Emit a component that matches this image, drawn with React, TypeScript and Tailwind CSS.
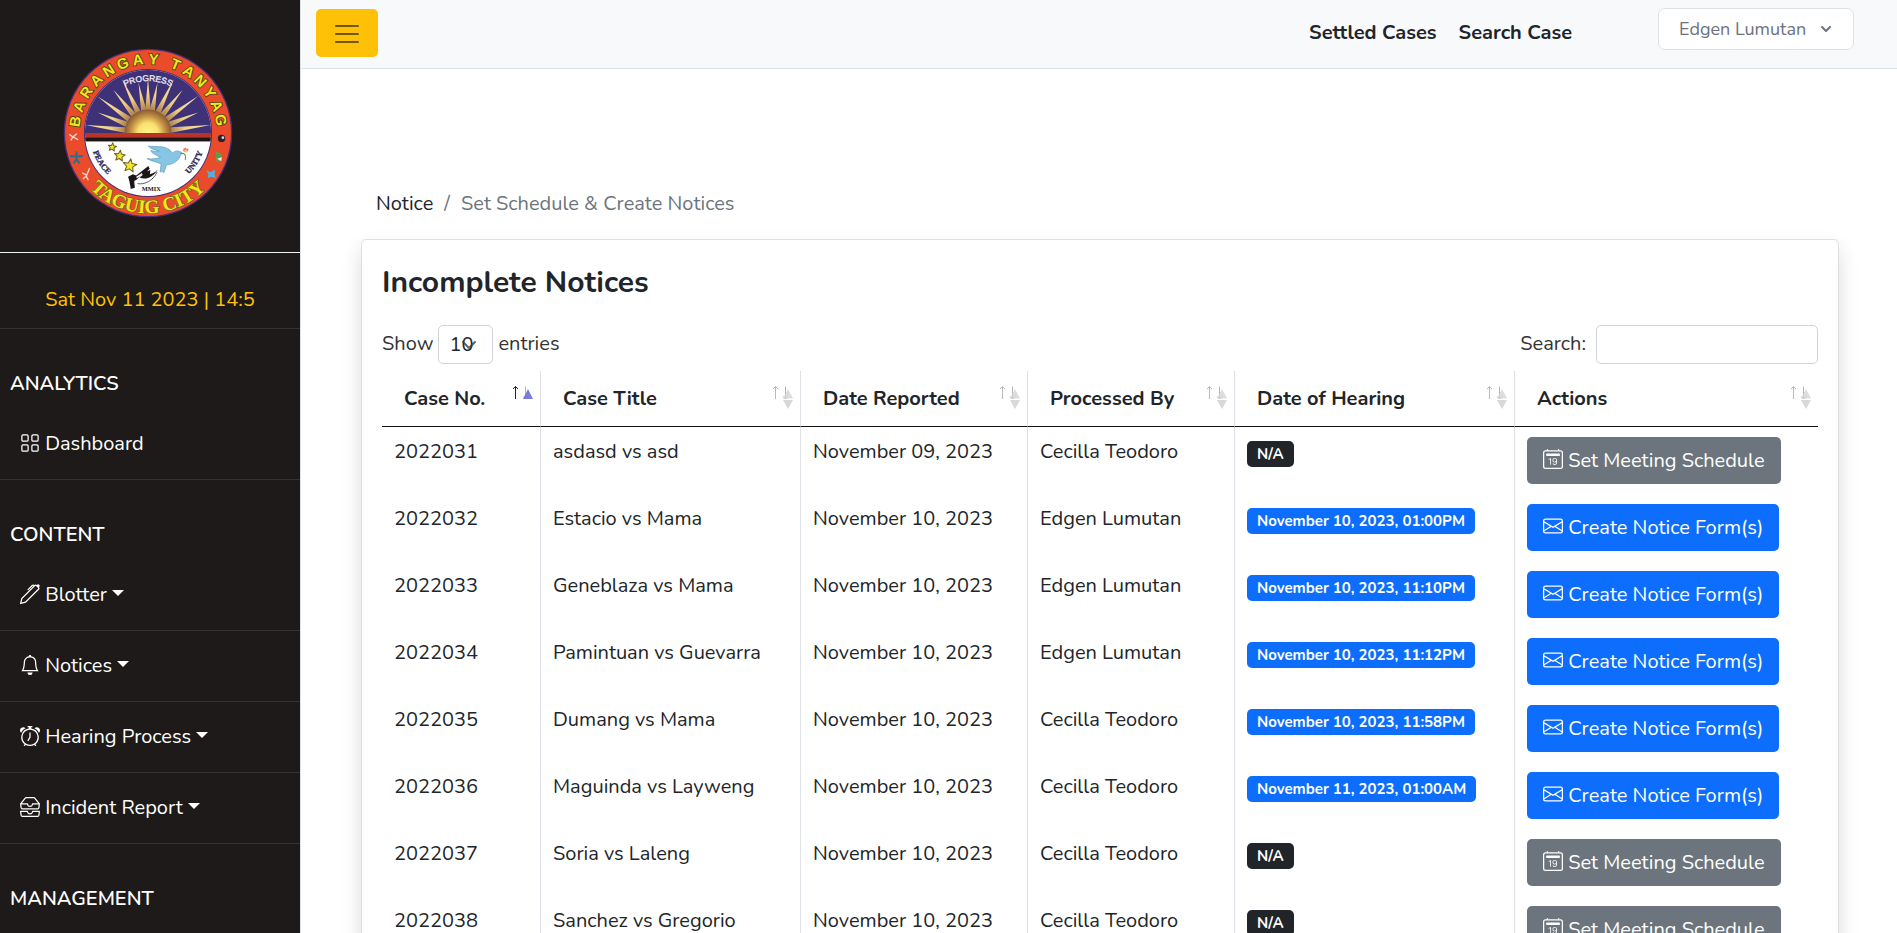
import type { ReactNode } from "react";
import type { IconType } from "react-icons";
import { BsAlarm, BsBell, BsCalendar2Date, BsEnvelope, BsGrid, BsInboxes, BsPen } from "react-icons/bs";

type Case = {
  no: string;
  title: string;
  reported: string;
  by: string;
  hearing: string | null;
};

const cases: Case[] = [
  { no: "2022031", title: "asdasd vs asd", reported: "November 09, 2023", by: "Cecilla Teodoro", hearing: null },
  { no: "2022032", title: "Estacio vs Mama", reported: "November 10, 2023", by: "Edgen Lumutan", hearing: "November 10, 2023, 01:00PM" },
  { no: "2022033", title: "Geneblaza vs Mama", reported: "November 10, 2023", by: "Edgen Lumutan", hearing: "November 10, 2023, 11:10PM" },
  { no: "2022034", title: "Pamintuan vs Guevarra", reported: "November 10, 2023", by: "Edgen Lumutan", hearing: "November 10, 2023, 11:12PM" },
  { no: "2022035", title: "Dumang vs Mama", reported: "November 10, 2023", by: "Cecilla Teodoro", hearing: "November 10, 2023, 11:58PM" },
  { no: "2022036", title: "Maguinda vs Layweng", reported: "November 10, 2023", by: "Cecilla Teodoro", hearing: "November 11, 2023, 01:00AM" },
  { no: "2022037", title: "Soria vs Laleng", reported: "November 10, 2023", by: "Cecilla Teodoro", hearing: null },
  { no: "2022038", title: "Sanchez vs Gregorio", reported: "November 10, 2023", by: "Cecilla Teodoro", hearing: null },
];

const columns = [
  { label: "Case No.", width: "w-[159px]" },
  { label: "Case Title", width: "w-[260px]" },
  { label: "Date Reported", width: "w-[227px]" },
  { label: "Processed By", width: "w-[207px]" },
  { label: "Date of Hearing", width: "w-[280px]" },
  { label: "Actions", width: "w-auto" },
];

const rays: [number, number][] = [
  [140, 284], [176, 247], [176, 200], [222, 180], [248, 148], [297, 160], [325, 146],
  [353, 160], [402, 148], [428, 180], [474, 198], [474, 247], [510, 284],
];

/* Points of a sun ray: a thin wedge from the disc at (325, 308) to its tip. */
function rayPoints([x, y]: [number, number]) {
  const dx = x - 325;
  const dy = y - 308;
  const len = Math.hypot(dx, dy);
  const nx = (-dy / len) * 9;
  const ny = (dx / len) * 9;
  const bx = 325 + (dx / len) * 58;
  const by = 308 + (dy / len) * 58;
  return `${bx + nx},${by + ny} ${x},${y} ${bx - nx},${by - ny}`;
}

function starPoints(cx: number, cy: number, r: number) {
  return Array.from({ length: 10 }, (_, i) => {
    const a = ((i * 36 - 90 + 8) * Math.PI) / 180;
    const k = i % 2 ? r * 0.45 : r;
    return `${cx + k * Math.cos(a)},${cy + k * Math.sin(a)}`;
  }).join(" ");
}

function RingWord({ word, from, step }: { word: string; from: number; step: number }) {
  return (
    <>
      {word.split("").map((letter, i) => (
        <text key={i} x="325" y="104" textAnchor="middle" transform={`rotate(${from + i * step} 325 308)`}>
          {letter}
        </text>
      ))}
    </>
  );
}

function Seal() {
  return (
    <svg viewBox="73 56 504 504" className="size-[170px]" role="img" aria-label="Barangay Tanyag seal">
      <defs>
        <radialGradient id="sun" gradientUnits="userSpaceOnUse" cx="325" cy="308" r="72">
          <stop offset="0" stopColor="#fff68a" />
          <stop offset="0.42" stopColor="#f9e070" />
          <stop offset="0.7" stopColor="#c59243" />
          <stop offset="1" stopColor="#7d5336" />
        </radialGradient>
        <radialGradient id="ray" gradientUnits="userSpaceOnUse" cx="325" cy="308" r="185">
          <stop offset="0.35" stopColor="#a87a45" />
          <stop offset="0.6" stopColor="#eed087" />
          <stop offset="1" stopColor="#f7e7a8" />
        </radialGradient>
        <clipPath id="disc">
          <circle cx="325" cy="308" r="187" />
        </clipPath>
        <clipPath id="sky">
          <rect x="130" y="110" width="390" height="198" />
        </clipPath>
        <path id="arc-progress" d="M 171 308 A 154 154 0 0 1 479 308" />
        <path id="arc-city" d="M 87 308 A 238 238 0 0 0 563 308" />
        <path id="arc-inner" d="M 153 308 A 172 172 0 0 0 497 308" />
      </defs>
      <circle cx="325" cy="308" r="250" fill="#4b2f78" />
      <circle cx="325" cy="308" r="246" fill="#ea4b2b" />
      <circle cx="325" cy="308" r="190" fill="#4a2f78" />
      <g clipPath="url(#disc)">
        <rect x="130" y="110" width="390" height="400" fill="#fefefe" />
        <rect x="130" y="110" width="390" height="198" fill="#3e3178" />
        <g clipPath="url(#sky)">
          {rays.map((ray) => (
            <polygon key={ray.join()} points={rayPoints(ray)} fill="url(#ray)" />
          ))}
          <circle cx="325" cy="308" r="70" fill="url(#sun)" />
        </g>
        <rect x="130" y="308" width="390" height="14" fill="#b93426" />
        <rect x="130" y="321" width="390" height="12" fill="#1b1718" />
      </g>
      <g fontFamily="Liberation Sans, sans-serif" fontWeight="700" fontSize="44" fill="#f3e51c" stroke="#4b4310" strokeWidth="5" paintOrder="stroke">
        <RingWord word="BARANGAY" from={-81} step={12.2} />
        <RingWord word="TANYAG" from={22} step={11.6} />
      </g>
      <text fontFamily="Liberation Serif, serif" fontWeight="700" fontSize="57" fill="#f3e51c" stroke="#6b6a1c" strokeWidth="4" paintOrder="stroke" textAnchor="middle">
        <textPath href="#arc-city" startOffset="50%">TAGUIG CITY</textPath>
      </text>
      <text fontFamily="Liberation Sans, sans-serif" fontSize="25" fill="#e9e6f2" stroke="#e9e6f2" strokeWidth="1" textAnchor="middle">
        <textPath href="#arc-progress" startOffset="50%">PROGRESS</textPath>
      </text>
      <g fontFamily="Liberation Serif, serif" fontWeight="700" fontSize="24" fill="#2c2a5c" stroke="#2c2a5c" strokeWidth="1" textAnchor="middle">
        <text><textPath href="#arc-inner" startOffset="18%">PEACE</textPath></text>
        <text><textPath href="#arc-inner" startOffset="82%">UNITY</textPath></text>
      </g>
      <text x="335" y="480" fontFamily="Liberation Serif, serif" fontWeight="700" fontSize="19" fill="#1b1718" textAnchor="middle">MMIX</text>
      <g fill="#f5e42a" stroke="#6b6020" strokeWidth="3" strokeLinejoin="round">
        <polygon points={starPoints(219, 350, 13)} />
        <polygon points={starPoints(241, 376, 17)} />
        <polygon points={starPoints(271, 405, 21)} />
      </g>
      <g fill="#86c5e4" stroke="#5799bd" strokeWidth="2" strokeLinejoin="round">
        <path d="M326 347 C350 349 374 346 388 357 L398 368 C406 358 418 360 427 368 L421 374 C416 392 396 402 380 402 L372 426 L366 421 L361 424 L364 400 C350 392 334 392 322 384 C338 386 352 384 362 380 C350 374 332 366 334 360 C344 363 352 363 358 362 C346 358 332 354 326 347 Z" />
      </g>
      <path d="M422 369 C434 366 440 376 435 388" fill="none" stroke="#5c9a4a" strokeWidth="3" />
      <path d="M430 354 l6 -3 4 4 6 -1 -3 8 -8 3 -6 -4 Z" fill="#ef7aa0" />
      <circle cx="437" cy="362" r="4" fill="#f2d33a" />
      <g fill="#1b1718">
        <path d="M266 438 L280 430 L290 434 L308 420 L326 406 L330 414 L322 422 L332 418 L330 436 L316 438 L308 430 L292 446 L284 450 L286 470 L274 474 L270 452 Z" />
        <path d="M300 440 C318 448 340 440 354 416 C344 428 326 434 312 430 Z" />
        <path d="M294 458 C314 462 340 450 352 424" fill="none" stroke="#1b1718" strokeWidth="2" />
      </g>
      <path d="M290 438 L308 426 L306 434 L292 442 Z" fill="#fefefe" />
      <g stroke="#f5d9cf" strokeWidth="4" fill="none">
        <path d="M92 312 l10 8 l12 -10 M102 320 l-6 10 M104 320 l14 8" />
        <path d="M132 444 l10 -8 l10 -24 M142 436 l6 12 M130 426 l12 6" />
      </g>
      <path d="M94 377 H132 M113 362 V388 M104 398 L113 386 L122 398" stroke="#2a6f8c" strokeWidth="6" fill="none" />
      <circle cx="543" cy="324" r="11" fill="#2b2230" />
      <circle cx="547" cy="322" r="4" fill="#d8d3dd" />
      <path d="M526 362 L544 370 L540 392 L528 394 Z" fill="#5aa04c" />
      <path d="M530 384 l14 -4 l-2 12 Z" fill="#f4eee0" />
      <path d="M498 418 l12 6 l14 -8 l-2 14 l4 12 l-14 -4 l-10 4 l2 -12 Z" fill="#4db3dc" />
    </svg>
  );
}

function SectionTitle({ children }: { children: ReactNode }) {
  return <h2 className="px-2.5 pt-10 pb-2.5 font-semibold text-white">{children}</h2>;
}

function NavItem({ icon: Icon, label, caret = true }: { icon: IconType; label: string; caret?: boolean }) {
  return (
    <a href="#" className="block border-b border-[#343130] px-5 py-5 text-white">
      <Icon className="inline-block size-5 align-[-0.125em]" aria-hidden="true" /> {label}
      {caret && (
        <span className="ml-[5px] inline-block border-x-[6px] border-t-[6px] border-x-transparent border-t-white align-[5px]" />
      )}
    </a>
  );
}

function Sidebar() {
  return (
    <aside className="h-screen w-[301px] shrink-0 overflow-hidden border-r border-[#dee2e6] bg-[#1d1a19]">
      <div className="flex h-[253px] items-center justify-center border-b border-[#f0f1f2] pt-3.5 pr-1">
        <Seal />
      </div>
      <p className="border-b border-[#343130] pt-8 pb-[13px] text-center text-[#ffc107]">Sat Nov 11 2023 | 14:5</p>
      <nav aria-label="Main">
        <SectionTitle>ANALYTICS</SectionTitle>
        <NavItem icon={BsGrid} label="Dashboard" caret={false} />
        <SectionTitle>CONTENT</SectionTitle>
        <NavItem icon={BsPen} label="Blotter" />
        <NavItem icon={BsBell} label="Notices" />
        <NavItem icon={BsAlarm} label="Hearing Process" />
        <NavItem icon={BsInboxes} label="Incident Report" />
        <SectionTitle>MANAGEMENT</SectionTitle>
      </nav>
    </aside>
  );
}

function TopBar() {
  return (
    <header className="flex items-start border-b border-[#dee2e6] bg-[#f8f9fb] pt-2 pr-[43px] pb-[11px] pl-[15px]">
      <button type="button" aria-label="Toggle navigation" className="mt-px flex h-12 w-[62px] items-center justify-center rounded-[5px] bg-[#ffc107] pt-px">
        <svg viewBox="0 0 30 30" className="size-[30px]" fill="none" stroke="rgba(0,0,0,0.55)" strokeWidth="2" strokeLinecap="round" strokeMiterlimit="10">
          <path d="M4 7h22M4 15h22M4 23h22" />
        </svg>
      </button>
      <nav className="mt-2.5 mr-[86px] ml-auto flex gap-[22px] font-bold" aria-label="Cases">
        <a href="#">Settled Cases</a>
        <a href="#">Search Case</a>
      </nav>
      <button type="button" className="flex h-[42px] w-[196px] items-center justify-between rounded-[7px] border border-[#dee2e6] bg-white pr-[17px] pl-5 text-[18px] leading-6 text-[#6b7280]">
        Edgen Lumutan
        <svg viewBox="0 0 20 20" className="size-5" fill="currentColor" aria-hidden="true">
          <path fillRule="evenodd" clipRule="evenodd" d="M5.293 7.293a1 1 0 011.414 0L10 10.586l3.293-3.293a1 1 0 111.414 1.414l-4 4a1 1 0 01-1.414 0l-4-4a1 1 0 010-1.414z" />
        </svg>
      </button>
    </header>
  );
}

function SortMark({ active }: { active: boolean }) {
  return (
    <svg viewBox="0 0 24 24" className="absolute top-[14px] right-1 h-6 w-6" fill="none" aria-hidden="true">
      <path d="M3.5 14V1.5M1 4L3.5 1.5L6 4" stroke={active ? "#212529" : "#b9babc"} />
      <path d="M13.5 1.5V14M11 11.5L13.5 14L16 11.5" stroke="#b4b5b7" />
      {active ? (
        <path d="M16 4L21 14H11Z" fill="#6a70d8" fillOpacity="0.9" />
      ) : (
        <>
          <path d="M16 4L21 13.5H11Z" fill="#d3d3d3" fillOpacity="0.8" />
          <path d="M16 24L21 15H11Z" fill="#d8d8d8" />
        </>
      )}
    </svg>
  );
}

function CaseTable() {
  return (
    <table className="mt-[7px] w-full table-fixed border-separate border-spacing-0 text-left">
      <thead>
        <tr>
          {columns.map((column, i) => (
            <th
              key={column.label}
              scope="col"
              aria-sort={i === 0 ? "ascending" : "none"}
              className={`${column.width} relative h-14 border-b border-b-[#111] px-[22px] py-3 font-bold not-last:border-r not-last:border-r-[#dee2e6]`}
            >
              {column.label}
              <SortMark active={i === 0} />
            </th>
          ))}
        </tr>
      </thead>
      <tbody>
        {cases.map((item) => (
          <tr key={item.no} className="align-top [&>td]:px-3 [&>td]:py-2.5 [&>td:not(:last-child)]:border-r [&>td:not(:last-child)]:border-[#dee2e6]">
            <td>{item.no}</td>
            <td>{item.title}</td>
            <td>{item.reported}</td>
            <td>{item.by}</td>
            <td>
              <span className={`${item.hearing ? "bg-[#0d6efd]" : "bg-[#212529]"} inline-block rounded-[5px] px-2.5 py-[5px] align-[-1px] text-[15px] leading-4 font-bold text-white`}>
                {item.hearing ?? "N/A"}
              </span>
            </td>
            <td>
              <button type="button" className={`${item.hearing ? "bg-[#0d6efd]" : "bg-[#6c757d]"} block h-[47px] rounded-[5px] px-4 text-white`}>
                {item.hearing ? (
                  <><BsEnvelope className="inline-block size-5 align-[-0.125em]" aria-hidden="true" /> Create Notice Form(s)</>
                ) : (
                  <><BsCalendar2Date className="inline-block size-5 align-[-0.125em]" aria-hidden="true" /> Set Meeting Schedule</>
                )}
              </button>
            </td>
          </tr>
        ))}
      </tbody>
    </table>
  );
}

export default function App() {
  return (
    <div className="flex h-screen overflow-hidden bg-white font-['Nunito',sans-serif] text-[20px] leading-[30px] text-[#212529]">
      <Sidebar />
      <div className="h-screen min-w-0 grow overflow-y-auto [scrollbar-width:none]">
        <TopBar />
        <main className="pt-[120px] pr-[58px] pb-10 pl-[60px]">
          <nav aria-label="Breadcrumb" className="mb-5 pl-[15px]">
            <ol className="flex">
              <li><a href="#">Notice</a></li>
              <li className="text-[#6c757d]"><span className="px-[11px]">/</span>Set Schedule &amp; Create Notices</li>
            </ol>
          </nav>
          <section className="rounded-[5px] border border-[#dfe0e1] bg-white px-5 pt-[25px] pb-5 shadow-[0_10px_20px_rgba(0,0,0,0.15)]">
            <h1 className="mb-6 text-[30px] leading-9 font-bold">Incomplete Notices</h1>
            <div className="flex items-center justify-between text-[#333]">
              <div className="flex items-center gap-[5px]">
                <label htmlFor="entries" className="pb-0.5">Show</label>
                <div className="relative">
                  <select id="entries" defaultValue="10" className="block h-[39px] w-[55px] appearance-none rounded-[5px] border border-[#ced4da] bg-white pl-2.5 leading-6 text-[#212529]">
                    <option>10</option>
                    <option>25</option>
                    <option>50</option>
                    <option>100</option>
                  </select>
                  <svg viewBox="0 0 16 16" className="pointer-events-none absolute top-3 right-4 size-4" fill="none" stroke="#343a40" strokeOpacity="0.8" strokeWidth="2" strokeLinecap="round" strokeLinejoin="round">
                    <path d="m2 5 6 6 6-6" />
                  </svg>
                </div>
                <label htmlFor="entries" className="pb-0.5">entries</label>
              </div>
              <div className="flex items-center gap-2.5">
                <label htmlFor="search" className="pb-0.5">Search:</label>
                <input id="search" type="search" className="h-[39px] w-[222px] rounded-[5px] border border-[#ced4da] bg-white px-2.5" />
              </div>
            </div>
            <CaseTable />
          </section>
        </main>
      </div>
    </div>
  );
}
